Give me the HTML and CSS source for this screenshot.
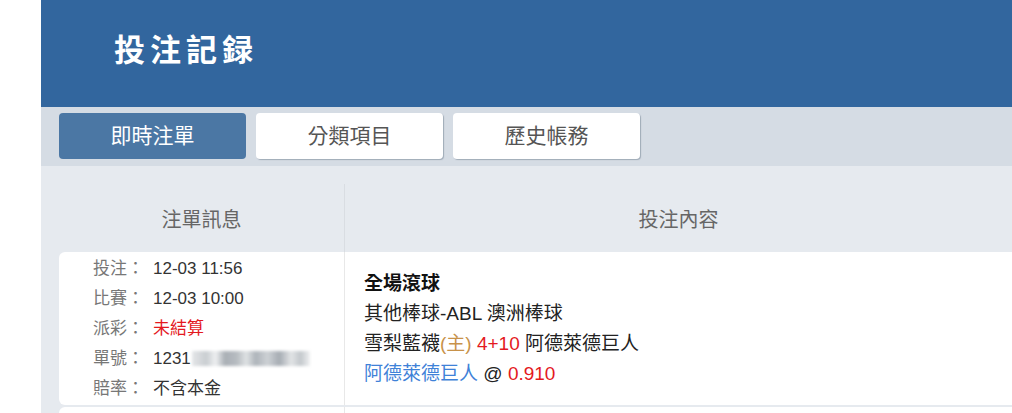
FILE: index.html
```html
<!DOCTYPE html>
<html lang="zh-Hant">
<head>
    <meta charset="UTF-8">
    <meta name="viewport" content="width=device-width, initial-scale=1.0">
    <title>投注記録</title>
    <link rel="stylesheet" href="styles.css">
</head>
<body>

    <div class="layout">
        <div class="side"></div>

        <div class="main">
            <div class="header">
                <h1 class="title">投注記録</h1>
            </div>

            <div class="tabs">
                <div class="tab active">即時注單</div>
                <div class="tab">分類項目</div>
                <div class="tab">歷史帳務</div>
            </div>

            <div class="content">
                <div class="thead">
                    <div class="th">注單訊息</div>
                    <div class="th th-right">投注內容</div>
                </div>

                <!-- bet rows -->
                <div class="row">
                    <div class="info">
                        <div class="line"><span class="label">投注：</span><span class="value">12-03 11:56</span></div>
                        <div class="line"><span class="label">比賽：</span><span class="value">12-03 10:00</span></div>
                        <div class="line"><span class="label">派彩：</span><span class="value red">未結算</span></div>
                        <div class="line"><span class="label">單號：</span><span class="value">1231<span class="masked"></span></span></div>
                        <div class="line"><span class="label">賠率：</span><span class="value">不含本金</span></div>
                    </div>
                    <div class="detail">
                        <div class="dline bold">全場滾球</div>
                        <div class="dline">其他棒球-ABL 澳洲棒球</div>
                        <div class="dline">雪梨藍襪<span class="home">(主)</span> <span class="red">4+10</span> 阿德萊德巨人</div>
                        <div class="dline"><span class="pick">阿德萊德巨人</span> @ <span class="red">0.910</span></div>
                    </div>
                </div>

                <div class="row">
                    <div class="info"></div>
                    <div class="detail"></div>
                </div>
            </div>
        </div>
    </div>

</body>
</html>
```

FILE: styles.css
```css
body {
    margin: 0;
    padding: 0;
    font-family: "Liberation Sans", "Noto Sans CJK TC", Arial, sans-serif;
    color: #333;
    background: #fff;
}

.layout {
    display: flex;
    min-height: 100vh;
}

.side {
    width: 41px;
    flex-shrink: 0;
    background: #fff;
}

.main {
    flex: 1;
    background: #e6eaef;
}

.header {
    height: 107px;
    background: #32669e;
    display: flex;
    align-items: center;
    padding-left: 73px;
}

.title {
    margin: 0;
    margin-top: -13px;
    color: #fff;
    font-family: "Noto Sans CJK TC", serif;
    font-size: 31px;
    font-weight: 700;
    letter-spacing: 5px;
}

.tabs {
    display: flex;
    gap: 10px;
    padding: 6px 18px 7px;
    background: #d5dce4;
}

.tab {
    width: 187px;
    height: 46px;
    line-height: 46px;
    text-align: center;
    background: #fff;
    color: #555;
    font-size: 21px;
    border-radius: 4px;
    box-shadow: 1px 1px 1px rgba(60, 80, 100, 0.35);
}

.tab.active {
    background: #4b77a4;
    color: #fff;
    box-shadow: none;
}

.content {
    padding: 18px 0 0 18px;
}

.thead {
    display: grid;
    grid-template-columns: 285px 1fr;
    height: 68px;
}

.th {
    display: flex;
    align-items: center;
    justify-content: center;
    font-size: 20px;
    color: #666;
}

.th-right {
    border-left: 1px solid #d9dde2;
}

.row {
    display: grid;
    grid-template-columns: 285px 1fr;
    background: #fff;
    border-radius: 6px 0 0 6px;
    margin-bottom: 2px;
    min-height: 153px;
}

.info {
    padding: 2px 0 0 34px;
    font-size: 17px;
}

.line {
    height: 30px;
    line-height: 30px;
    white-space: nowrap;
}

.label {
    display: inline-block;
    width: 60px;
    color: #777;
}

.value {
    color: #333;
}

.masked {
    display: inline-block;
    width: 118px;
    height: 15px;
    margin-left: 1px;
    vertical-align: -2px;
    background: linear-gradient(90deg, #e4e6e8 0%, #c9cdd1 12%, #eef0f1 20%, #a9afb5 28%, #b7bcc1 38%, #dfe2e4 46%, #aeb4ba 54%, #cdd1d5 64%, #a6acb3 74%, #e2e4e6 84%, #c3c8cc 92%, #f0f1f2 100%);
    filter: blur(1.5px);
}

.detail {
    border-left: 1px solid #e8e8e8;
    padding-left: 19px;
    display: flex;
    flex-direction: column;
    justify-content: center;
    font-size: 19px;
    color: #222;
}

.dline {
    line-height: 30px;
    white-space: nowrap;
}

.bold {
    font-weight: 700;
    color: #111;
}

.red {
    color: #e4191e;
}

.home {
    color: #c8924a;
}

.pick {
    color: #3f82d8;
}
```
